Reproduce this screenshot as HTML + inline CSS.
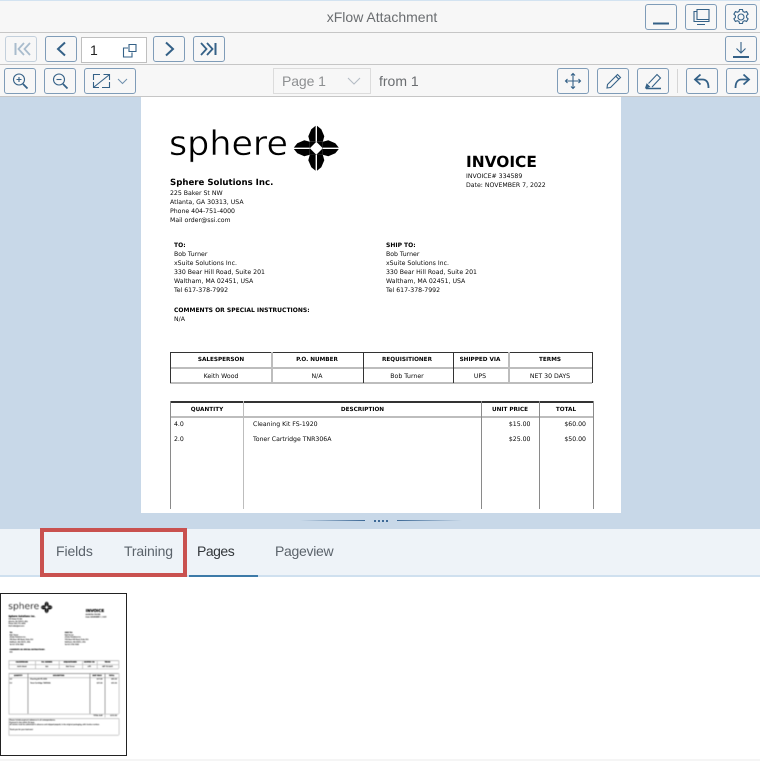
<!DOCTYPE html>
<html><head><meta charset="utf-8"><style>
html,body{margin:0;padding:0}
body{width:760px;height:761px;position:relative;overflow:hidden;background:#fff;font-family:"Liberation Sans",sans-serif}
.a{position:absolute}
.bar{position:absolute;left:0;width:760px;background:#f7f7f7;border-bottom:1px solid #c6c6c6;box-sizing:border-box}
.b{position:absolute;box-sizing:border-box;height:26px;width:32px;border:1px solid #7f9cb8;border-radius:3px;background:#f7f7f7}
.b svg{position:absolute;left:0;top:0;width:30px;height:24px;fill:none;stroke:#346187;stroke-width:1.1}
.tab{position:absolute;top:543px;font-size:14px;line-height:17px;color:#5b636b;white-space:nowrap}
#view{position:absolute;left:0;top:97px;width:760px;height:432px;background:#c8d8e8}
#clip{position:absolute;left:141px;top:0;width:480px;height:416px;background:#fff}
#cl{position:absolute;left:0;top:0;width:480px;height:412px;overflow:hidden;filter:blur(.28px)}
.doc{position:absolute;left:0;top:0;width:480px;height:615px;background:#fff;font-family:"DejaVu Sans",sans-serif;color:#0a0a0a;font-size:6.2px;text-rendering:geometricPrecision}
.doc div{position:absolute;white-space:nowrap;line-height:9px}
.doc .k{font-weight:bold;color:#000;font-size:6px}
.doc .h{font-weight:bold;color:#000;font-size:5.7px}
.doc .l{background:#8a8a8a;line-height:0}
.doc .g{background:#bdbdbd;line-height:0}
.doc .d{background:#333;line-height:0}
.c{transform:translateX(-50%)}
.r{transform:translateX(-100%)}
#thumb{position:absolute;left:0;top:593px;width:127px;height:163px;box-sizing:border-box;border:1px solid #222;overflow:hidden;background:#fff}
#tb{position:absolute;left:0;top:0;width:125px;height:161px;overflow:hidden;filter:blur(.4px)}
#thumb .doc{transform:scale(.2604);transform-origin:0 0}
#thumb .doc div{text-shadow:0 0 1px #000}
</style></head><body>

<div class="a" style="left:0;top:0;width:760px;height:2px;background:#d3e3f1"></div>
<div class="bar" style="top:1px;height:32px"></div>
<div class="bar" style="top:33px;height:32px"></div>
<div class="bar" style="top:65px;height:32px"></div>
<div class="a" style="left:0;top:9px;width:760px;text-align:center;font-size:14px;line-height:16px;color:#6a6d70;margin-left:2px">xFlow Attachment</div>

<!-- top row -->
<div class="b" style="left:645px;top:4px"><svg viewBox="0 0 30 24"><path d="M7 18.500H23" stroke-width="2"/></svg></div>
<div class="b" style="left:685px;top:4px"><svg viewBox="0 0 30 24"><path d="M11 4.500h12v10H11zM11 6.500H8v10h15v-2M11 19.500h8"/></svg></div>
<div class="b" style="left:725px;top:4px"><svg viewBox="0 0 30 24"><circle cx="15" cy="12" r="3"/><path d="M13.500 4.500h3l.5 2 1.600.8 2-.7 1.500 2.600-1.500 1.400v1.800l1.500 1.400-1.500 2.600-2-.7-1.600.8-.5 2h-3l-.5-2-1.600-.8-2 .7-1.500-2.600 1.500-1.400v-1.800l-1.500-1.400 1.500-2.600 2 .7 1.600-.8z"/></svg></div>

<!-- second row -->
<div class="b" style="left:5px;top:36px;border-color:#c3d0dc"><svg viewBox="0 0 30 24" style="stroke:#a9bccd"><path d="M9.500 6v12" stroke-width="2"/><path d="M18 6l-5.500 6 5.500 6M24 6l-5.500 6 5.500 6" stroke-width="1.800"/></svg></div>
<div class="b" style="left:45px;top:36px"><svg viewBox="0 0 30 24"><path d="M19 5.500l-7 6.500 7 6.500" stroke-width="2"/></svg></div>
<div class="a" style="left:81px;top:37px;width:66px;height:26px;box-sizing:border-box;border:1px solid #bfbfbf;background:#fff;font-size:14px;line-height:24px;color:#222;padding-left:8px">1</div>
<svg class="a" style="left:122px;top:43px;fill:none;stroke:#346187;stroke-width:1.100" width="16" height="16" viewBox="0 0 16 16"><path d="M7 1.500h7v7H7zM6 5H1.500v9H10V9.500"/></svg>
<div class="b" style="left:153px;top:36px"><svg viewBox="0 0 30 24"><path d="M12 5.500l7 6.500-7 6.500" stroke-width="2"/></svg></div>
<div class="b" style="left:193px;top:36px"><svg viewBox="0 0 30 24"><path d="M7 6l5.500 6L7 18M13 6l5.500 6L13 18" stroke-width="1.800"/><path d="M21.500 6v12" stroke-width="2"/></svg></div>
<div class="b" style="left:725px;top:36px"><svg viewBox="0 0 30 24"><path d="M15 5v10.500M10.500 11.500l4.500 4.500 4.500-4.500"/><path d="M7 20H23" stroke-width="2"/></svg></div>

<!-- third row -->
<div class="b" style="left:4px;top:68px"><svg viewBox="0 0 30 24"><circle cx="14" cy="10.500" r="5.500"/><path d="M18 15l4.500 4.500" stroke-width="1.800"/><path d="M11.500 10.500h5M14 8v5"/></svg></div>
<div class="b" style="left:44px;top:68px"><svg viewBox="0 0 30 24"><circle cx="14" cy="10.500" r="5.500"/><path d="M18 15l4.500 4.500" stroke-width="1.800"/><path d="M11.500 10.500h5"/></svg></div>
<div class="b" style="left:84px;top:68px;width:52px"><svg viewBox="0 0 50 24" style="width:50px"><path d="M8.500 11V5.500H15M17 18.500h7.500V13M9 18L24 6M18.500 5.500H24.500V11M8.500 13V18.500H14"/><path d="M33 10l4.500 4.500 4.500-4.500" stroke="#6f90ad" stroke-width="1"/></svg></div>
<div class="a" style="left:273px;top:68px;width:98px;height:26px;box-sizing:border-box;border:1px solid #dcdcdc;background:#f7f7f7;font-size:14px;line-height:24px;color:#8d8f91;padding-left:8px;letter-spacing:-.1px">Page 1</div>
<svg class="a" style="left:347px;top:76px;fill:none;stroke:#b4bcc4;stroke-width:1.100" width="14" height="10" viewBox="0 0 14 10"><path d="M1 2l6 6 6-6"/></svg>
<div class="a" style="left:379px;top:73px;font-size:14px;line-height:16px;color:#6a6d70;white-space:nowrap">from 1</div>

<div class="b" style="left:557px;top:68px"><svg viewBox="0 0 30 24"><path d="M15 4.500v15M7.500 12h15M13 6.500l2-2 2 2M13 17.500l2 2 2-2M9.500 10l-2 2 2 2M20.500 10l2 2-2 2"/></svg></div>
<div class="b" style="left:597px;top:68px"><svg viewBox="0 0 30 24"><path d="M9.500 15.500L19.500 5.500l3 3-10 10-3.500.5zM17.800 7.200l3 3"/></svg></div>
<div class="b" style="left:637px;top:68px"><svg viewBox="0 0 30 24"><path d="M10.500 14.500L19 5.500l3.500 3.500-8.500 9"/><path d="M8 18.500l3-1-2-2zM8 19.500h15" stroke-width="1.500"/></svg></div>
<div class="a" style="left:677px;top:69px;width:1px;height:24px;background:#d5d5d5"></div>
<div class="b" style="left:686px;top:68px"><svg viewBox="0 0 30 24"><path d="M13.500 5.500L8 10.500l5.500 5" stroke-width="1.800"/><path d="M8.500 10.500h7c3.500 0 6 2.500 6 8.500" stroke-width="1.800"/></svg></div>
<div class="b" style="left:726px;top:68px"><svg viewBox="0 0 30 24"><path d="M16.500 5.500l5.500 5-5.500 5" stroke-width="1.800"/><path d="M21.500 10.500h-7c-3.500 0-6 2.500-6 8.500" stroke-width="1.800"/></svg></div>

<div id="view">
<div id="clip"><div id="cl">
<div class="doc">
<svg style="position:absolute;left:0;top:0" width="480" height="80"><text x="28" y="58" font-family="DejaVu Sans" font-size="34" textLength="119" lengthAdjust="spacingAndGlyphs" fill="#000" stroke="#fff" stroke-width=".45">sphere</text>
<g transform="translate(175.300,51.300)" fill="#000"><path d="M-.7-22.500L-5-19-8-12-6.500-6.500-.7-6.500ZM.7-22.500L5-19 8-12 6.500-6.500 .7-6.500Z"/><path transform="rotate(90)" d="M-.7-22.500L-5-19-8-12-6.500-6.500-.7-6.500ZM.7-22.500L5-19 8-12 6.500-6.500 .7-6.500Z"/><path transform="rotate(180)" d="M-.7-22.500L-5-19-8-12-6.500-6.500-.7-6.500ZM.7-22.500L5-19 8-12 6.500-6.500 .7-6.500Z"/><path transform="rotate(270)" d="M-.7-22.500L-5-19-8-12-6.500-6.500-.7-6.500ZM.7-22.500L5-19 8-12 6.500-6.500 .7-6.500Z"/><rect x="-6.500" y="-6.500" width="13" height="13"/><path d="M0-6.500L6.500 0 0 6.500-6.500 0Z" fill="#fff"/></g></svg>
<div class="k" style="left:29px;top:82px;font-size:8.600px">Sphere Solutions Inc.</div>
<div style="left:29px;top:91.500px">225 Baker St NW</div>
<div style="left:29px;top:100.500px">Atlanta, GA 30313, USA</div>
<div style="left:29px;top:109.500px">Phone 404-751-4000</div>
<div style="left:29px;top:118.500px">Mail order@ssi.com</div>
<div class="k" style="left:325px;top:56px;font-size:15.400px;line-height:18px">INVOICE</div>
<div style="left:325px;top:75px">INVOICE# 334589</div>
<div style="left:325px;top:83.500px">Date: NOVEMBER 7, 2022</div>

<div class="k" style="left:33px;top:143.500px">TO:</div>
<div style="left:33px;top:152.500px">Bob Turner</div>
<div style="left:33px;top:161.500px">xSuite Solutions Inc.</div>
<div style="left:33px;top:170.500px">330 Bear Hill Road, Suite 201</div>
<div style="left:33px;top:179.500px">Waltham, MA 02451, USA</div>
<div style="left:33px;top:188.500px">Tel 617-378-7992</div>
<div class="k" style="left:245px;top:143.500px">SHIP TO:</div>
<div style="left:245px;top:152.500px">Bob Turner</div>
<div style="left:245px;top:161.500px">xSuite Solutions Inc.</div>
<div style="left:245px;top:170.500px">330 Bear Hill Road, Suite 201</div>
<div style="left:245px;top:179.500px">Waltham, MA 02451, USA</div>
<div style="left:245px;top:188.500px">Tel 617-378-7992</div>
<div class="k" style="left:33px;top:208.500px">COMMENTS OR SPECIAL INSTRUCTIONS:</div>
<div style="left:33px;top:217.500px">N/A</div>

<div class="d" style="left:29px;top:255px;width:422px;height:1px"></div>
<div class="g" style="left:29px;top:270px;width:422px;height:2px"></div>
<div class="g" style="left:29px;top:285px;width:422px;height:2px"></div>
<div class="d" style="left:29px;top:255px;width:1px;height:31px"></div>
<div class="g" style="left:130px;top:255px;width:2px;height:31px"></div>
<div class="d" style="left:222px;top:255px;width:1px;height:31px"></div>
<div class="d" style="left:312px;top:255px;width:1px;height:31px"></div>
<div class="g" style="left:367px;top:255px;width:2px;height:31px"></div>
<div class="d" style="left:451px;top:255px;width:1px;height:31px"></div>
<div class="h c" style="left:80px;top:259px">SALESPERSON</div>
<div class="h c" style="left:176px;top:259px">P.O. NUMBER</div>
<div class="h c" style="left:266px;top:259px">REQUISITIONER</div>
<div class="h c" style="left:339px;top:259px">SHIPPED VIA</div>
<div class="h c" style="left:409px;top:259px">TERMS</div>
<div class="c" style="left:80px;top:274.500px">Keith Wood</div>
<div class="c" style="left:176px;top:274.500px">N/A</div>
<div class="c" style="left:266px;top:274.500px">Bob Turner</div>
<div class="c" style="left:339px;top:274.500px">UPS</div>
<div class="c" style="left:409px;top:274.500px">NET 30 DAYS</div>

<div class="d" style="left:29px;top:304px;width:423px;height:2px"></div>
<div class="g" style="left:29px;top:319px;width:423px;height:2px"></div>
<div class="l" style="left:29px;top:304px;width:1px;height:156px"></div>
<div class="g" style="left:102px;top:304px;width:1px;height:156px"></div>
<div class="l" style="left:340px;top:304px;width:1px;height:156px"></div>
<div class="l" style="left:398px;top:304px;width:1px;height:156px"></div>
<div class="l" style="left:452px;top:304px;width:1px;height:156px"></div>
<div class="h c" style="left:66px;top:308.500px">QUANTITY</div>
<div class="h c" style="left:221.500px;top:308.500px">DESCRIPTION</div>
<div class="h c" style="left:369px;top:308.500px">UNIT PRICE</div>
<div class="h c" style="left:425px;top:308.500px">TOTAL</div>
<div style="left:33px;top:323px">4.0</div>
<div style="left:112px;top:323px">Cleaning Kit FS-1920</div>
<div class="r" style="left:389.500px;top:323px">$15.00</div>
<div class="r" style="left:445px;top:323px">$60.00</div>
<div style="left:33px;top:337.500px">2.0</div>
<div style="left:112px;top:337.500px">Toner Cartridge TNR306A</div>
<div class="r" style="left:389.500px;top:337.500px">$25.00</div>
<div class="r" style="left:445px;top:337.500px">$50.00</div>
</div>
</div></div>
<!-- splitter -->
<div class="a" style="left:300px;top:423px;width:65px;height:1px;background:linear-gradient(90deg,rgba(61,105,150,0),#3d6996)"></div>
<div class="a" style="left:397px;top:423px;width:65px;height:1px;background:linear-gradient(90deg,#3d6996,rgba(61,105,150,0))"></div>
<div class="a" style="left:374px;top:423px;width:2px;height:2px;background:#3d6996"></div>
<div class="a" style="left:378px;top:423px;width:2px;height:2px;background:#3d6996"></div>
<div class="a" style="left:382px;top:423px;width:2px;height:2px;background:#3d6996"></div>
<div class="a" style="left:386px;top:423px;width:2px;height:2px;background:#3d6996"></div>
</div>

<!-- tabs -->
<div class="a" style="left:0;top:529px;width:760px;height:46px;background:#eef3f8"></div>
<div class="a" style="left:0;top:575px;width:760px;height:2px;background:#cfe0ef"></div>
<div class="a" style="left:189px;top:575px;width:69px;height:2px;background:#3d7aa8"></div>
<div class="tab" style="left:56px;letter-spacing:-.1px">Fields</div>
<div class="tab" style="left:124px;letter-spacing:-.15px">Training</div>
<div class="tab" style="left:197px;color:#32363a;letter-spacing:-.5px">Pages</div>
<div class="tab" style="left:275px;letter-spacing:-.3px">Pageview</div>
<div class="a" style="left:40px;top:528px;width:147px;height:49px;box-sizing:border-box;border:4px solid #c9514f"></div>

<!-- thumb -->
<div id="thumb"><div id="tb">
<div class="doc">
<svg style="position:absolute;left:0;top:0" width="480" height="80"><text x="28" y="58" font-family="DejaVu Sans" font-size="34" textLength="119" lengthAdjust="spacingAndGlyphs" fill="#000" stroke="#fff" stroke-width=".45">sphere</text>
<g transform="translate(175.300,51.300)" fill="#000"><path d="M-.7-22.500L-5-19-8-12-6.500-6.500-.7-6.500ZM.7-22.500L5-19 8-12 6.500-6.500 .7-6.500Z"/><path transform="rotate(90)" d="M-.7-22.500L-5-19-8-12-6.500-6.500-.7-6.500ZM.7-22.500L5-19 8-12 6.500-6.500 .7-6.500Z"/><path transform="rotate(180)" d="M-.7-22.500L-5-19-8-12-6.500-6.500-.7-6.500ZM.7-22.500L5-19 8-12 6.500-6.500 .7-6.500Z"/><path transform="rotate(270)" d="M-.7-22.500L-5-19-8-12-6.500-6.500-.7-6.500ZM.7-22.500L5-19 8-12 6.500-6.500 .7-6.500Z"/><rect x="-6.500" y="-6.500" width="13" height="13"/><path d="M0-6.500L6.500 0 0 6.500-6.500 0Z" fill="#fff"/></g></svg>
<div class="k" style="left:29px;top:82px;font-size:8.600px">Sphere Solutions Inc.</div>
<div style="left:29px;top:91.500px">225 Baker St NW</div>
<div style="left:29px;top:100.500px">Atlanta, GA 30313, USA</div>
<div style="left:29px;top:109.500px">Phone 404-751-4000</div>
<div style="left:29px;top:118.500px">Mail order@ssi.com</div>
<div class="k" style="left:325px;top:56px;font-size:15.400px;line-height:18px">INVOICE</div>
<div style="left:325px;top:75px">INVOICE# 334589</div>
<div style="left:325px;top:83.500px">Date: NOVEMBER 7, 2022</div>
<div class="k" style="left:33px;top:143.500px">TO:</div>
<div style="left:33px;top:152.500px">Bob Turner</div>
<div style="left:33px;top:161.500px">xSuite Solutions Inc.</div>
<div style="left:33px;top:170.500px">330 Bear Hill Road, Suite 201</div>
<div style="left:33px;top:179.500px">Waltham, MA 02451, USA</div>
<div style="left:33px;top:188.500px">Tel 617-378-7992</div>
<div class="k" style="left:245px;top:143.500px">SHIP TO:</div>
<div style="left:245px;top:152.500px">Bob Turner</div>
<div style="left:245px;top:161.500px">xSuite Solutions Inc.</div>
<div style="left:245px;top:170.500px">330 Bear Hill Road, Suite 201</div>
<div style="left:245px;top:179.500px">Waltham, MA 02451, USA</div>
<div style="left:245px;top:188.500px">Tel 617-378-7992</div>
<div class="k" style="left:33px;top:208.500px">COMMENTS OR SPECIAL INSTRUCTIONS:</div>
<div style="left:33px;top:217.500px">N/A</div>
<div class="l" style="left:29px;top:255px;width:422.500px;height:2px"></div>
<div class="g" style="left:29px;top:270px;width:422.500px;height:3px"></div>
<div class="g" style="left:29px;top:285.500px;width:422.500px;height:3px"></div>
<div class="g" style="left:29px;top:255px;width:3px;height:31px"></div>
<div class="g" style="left:130.500px;top:255px;width:3px;height:31px"></div>
<div class="g" style="left:221.500px;top:255px;width:3px;height:31px"></div>
<div class="g" style="left:311.500px;top:255px;width:3px;height:31px"></div>
<div class="g" style="left:367.500px;top:255px;width:3px;height:31px"></div>
<div class="g" style="left:451px;top:255px;width:3px;height:31px"></div>
<div class="h c" style="left:80px;top:259px">SALESPERSON</div>
<div class="h c" style="left:176px;top:259px">P.O. NUMBER</div>
<div class="h c" style="left:266px;top:259px">REQUISITIONER</div>
<div class="h c" style="left:339px;top:259px">SHIPPED VIA</div>
<div class="h c" style="left:409px;top:259px">TERMS</div>
<div class="c" style="left:80px;top:274.500px">Keith Wood</div>
<div class="c" style="left:176px;top:274.500px">N/A</div>
<div class="c" style="left:266px;top:274.500px">Bob Turner</div>
<div class="c" style="left:339px;top:274.500px">UPS</div>
<div class="c" style="left:409px;top:274.500px">NET 30 DAYS</div>
<div class="l" style="left:29px;top:304px;width:423px;height:3px"></div>
<div class="g" style="left:29px;top:319.500px;width:423px;height:3px"></div>
<div class="g" style="left:29px;top:304px;width:3px;height:156px"></div>
<div class="l" style="left:102px;top:304px;width:3px;height:156px"></div>
<div class="l" style="left:339.500px;top:304px;width:3px;height:156px"></div>
<div class="l" style="left:397.500px;top:304px;width:3px;height:156px"></div>
<div class="g" style="left:451.500px;top:304px;width:3px;height:156px"></div>
<div class="h c" style="left:66px;top:308.500px">QUANTITY</div>
<div class="h c" style="left:221.500px;top:308.500px">DESCRIPTION</div>
<div class="h c" style="left:369px;top:308.500px">UNIT PRICE</div>
<div class="h c" style="left:425px;top:308.500px">TOTAL</div>
<div style="left:33px;top:323px">4.0</div>
<div style="left:112px;top:323px">Cleaning Kit FS-1920</div>
<div class="r" style="left:389.500px;top:323px">$15.00</div>
<div class="r" style="left:445px;top:323px">$60.00</div>
<div style="left:33px;top:337.500px">2.0</div>
<div style="left:112px;top:337.500px">Toner Cartridge TNR306A</div>
<div class="r" style="left:389.500px;top:337.500px">$25.00</div>
<div class="r" style="left:445px;top:337.500px">$50.00</div>
<div class="g" style="left:29px;top:460px;width:423px;height:3px"></div>
<div class="r" style="left:389.500px;top:463px">TOTAL DUE</div>
<div class="r" style="left:445px;top:463px">$110.00</div>
<div class="g" style="left:397.500px;top:460px;width:3px;height:14px"></div>
<div class="g" style="left:29px;top:477px;width:423px;height:3px"></div>
<div class="g" style="left:29px;top:541px;width:423px;height:3px"></div>
<div class="g" style="left:29px;top:477px;width:3px;height:64px"></div>
<div class="g" style="left:451.500px;top:477px;width:3px;height:64px"></div>
<div style="left:33px;top:480px">Please include payment reference in all correspondence.</div>
<div style="left:33px;top:489px">Payment is due within 30 days.</div>
<div style="left:33px;top:498px">All returns must be authorized in advance and shipped prepaid, in the original packaging, with invoice number.</div>
<div style="left:33px;top:516px">Thank you for your business!</div>
</div>
</div></div>
<div class="a" style="left:0;top:759px;width:760px;height:2px;background:#f5f5f5"></div>
</body></html>
